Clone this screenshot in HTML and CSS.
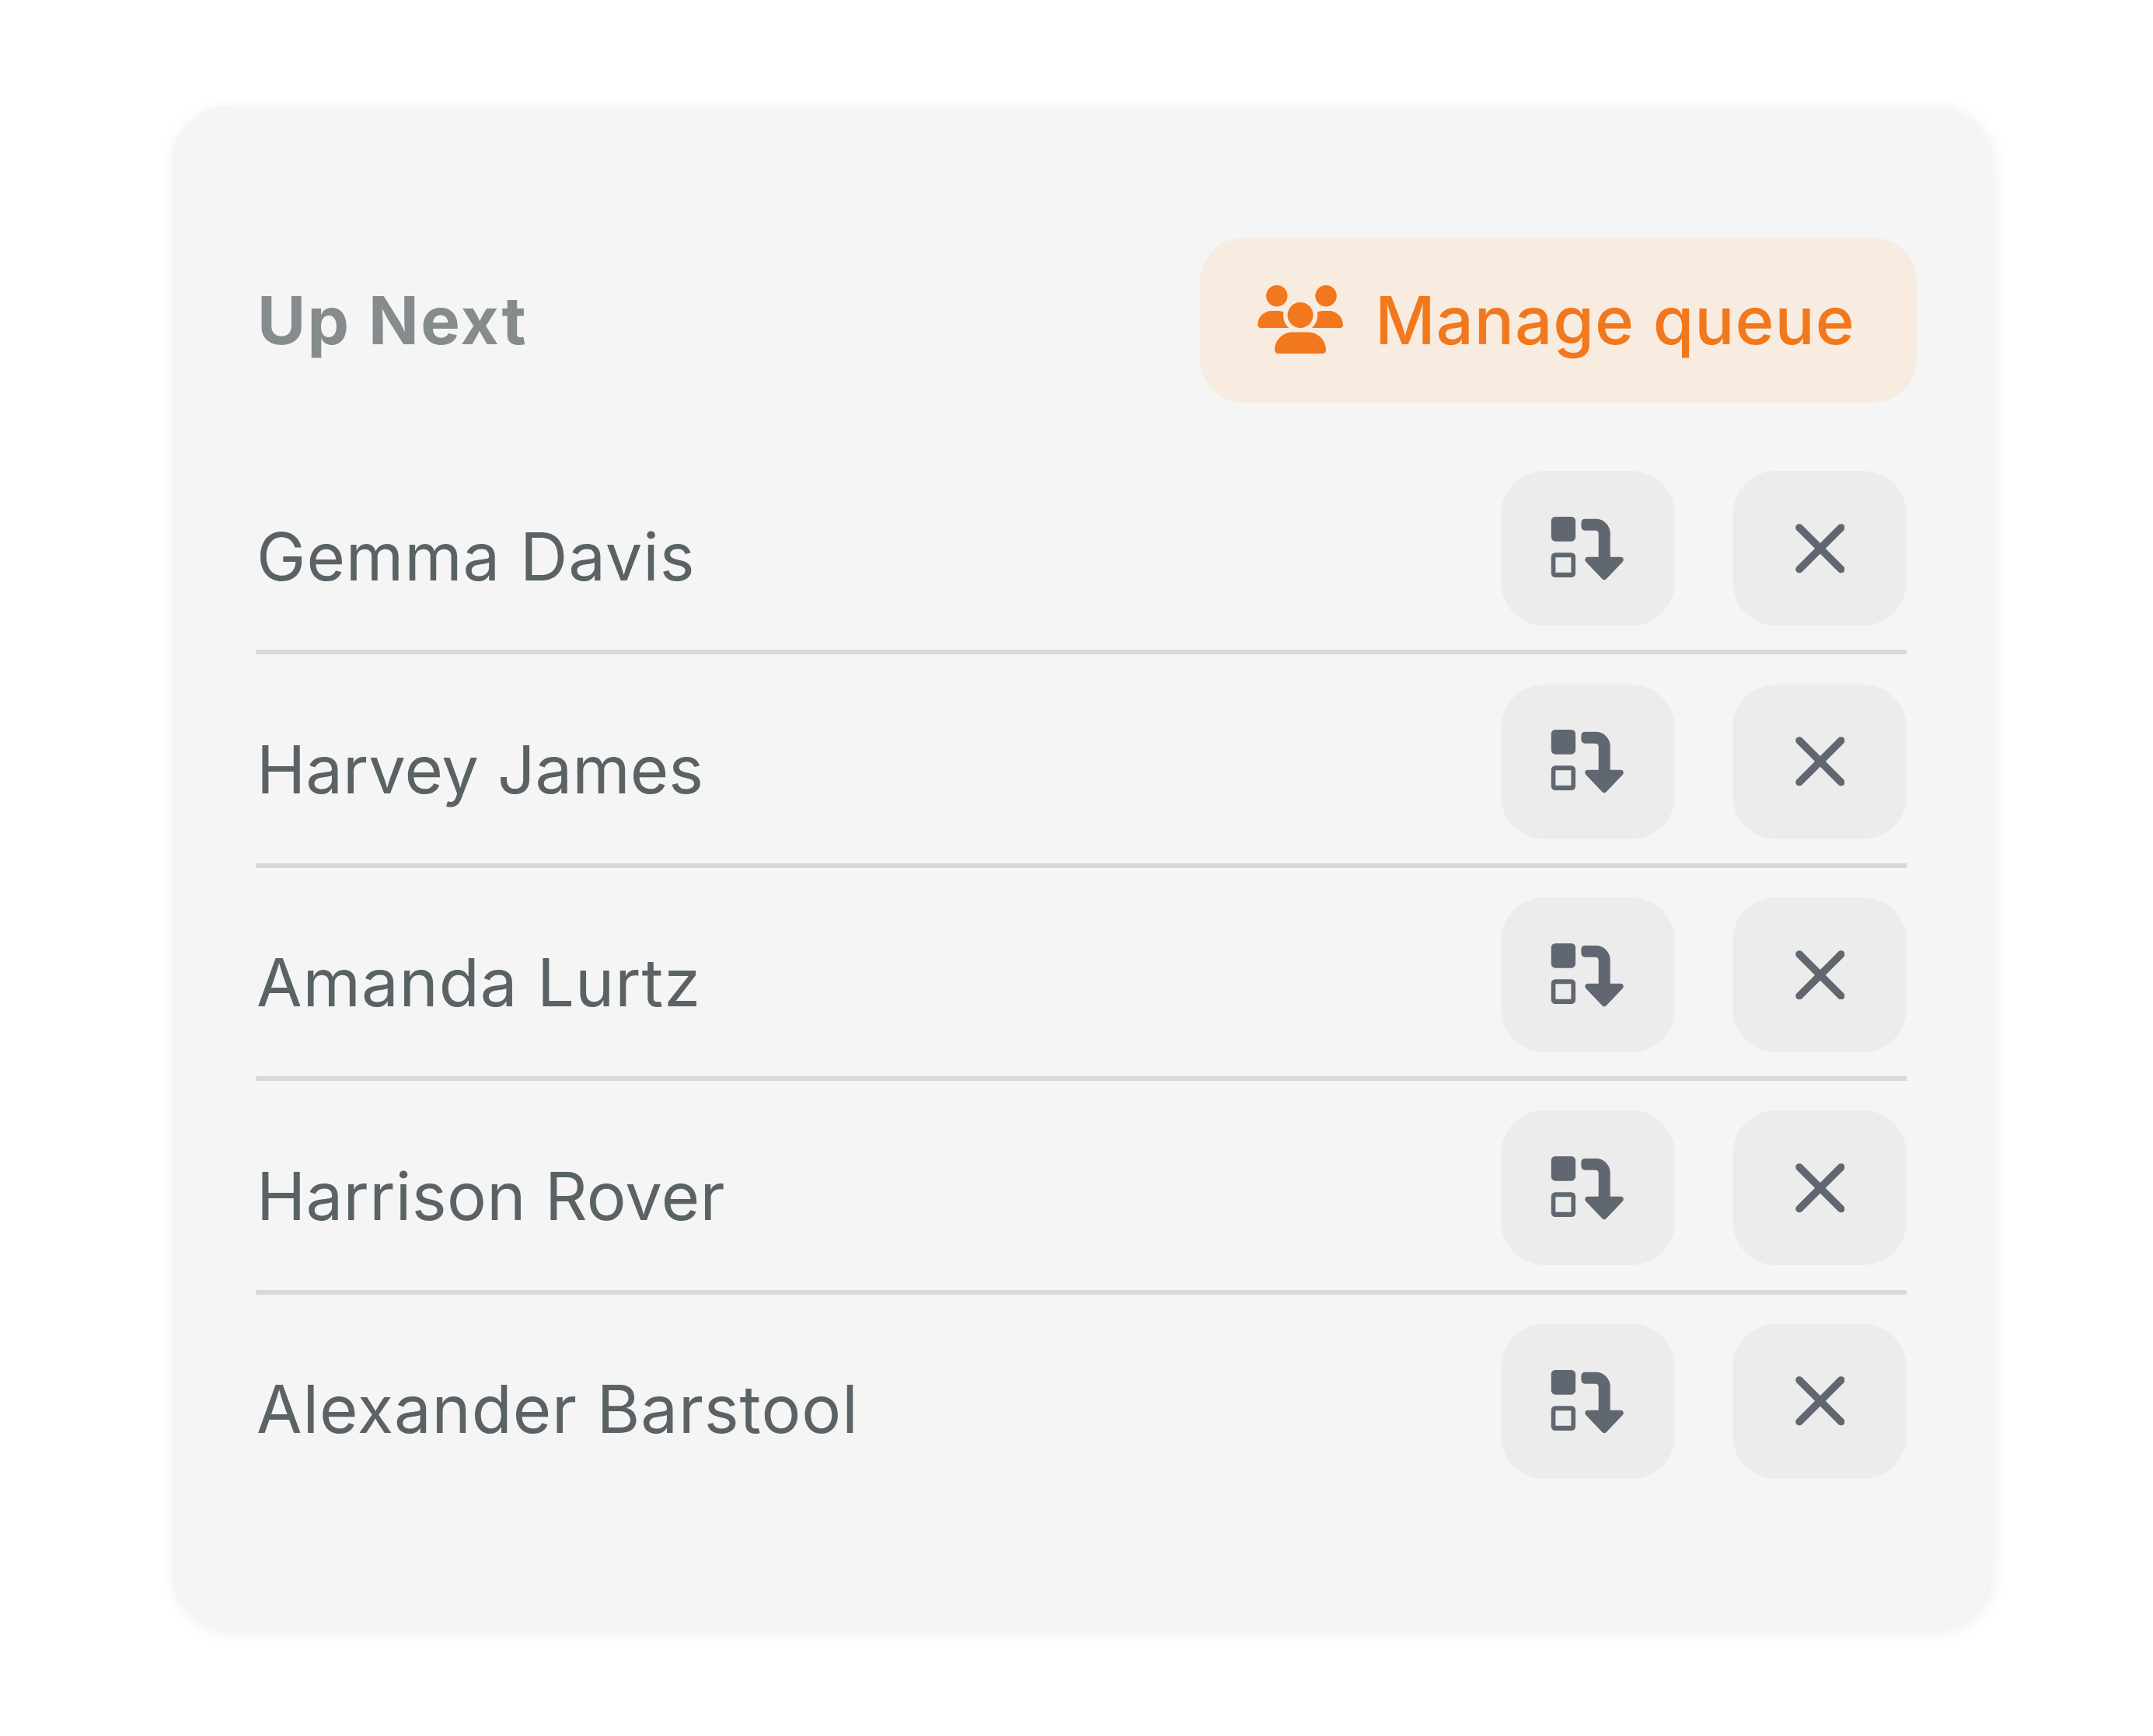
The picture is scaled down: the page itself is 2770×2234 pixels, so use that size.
FILE: index.html
```html
<!DOCTYPE html>
<html lang="en">
<head>
<meta charset="utf-8">
<title>Up Next</title>
<link rel="stylesheet" href="styles.css">
</head>
<body>
<svg width="0" height="0" class="sprite" aria-hidden="true">
  <symbol id="swap" viewBox="256 220 284 250">
    <rect x="258" y="223" width="94" height="95" rx="16"/>
    <path fill-rule="evenodd" d="M274 362H336a16 16 0 0 1 16 16V441a16 16 0 0 1-16 16H274a16 16 0 0 1-16-16V378a16 16 0 0 1 16-16ZM275 380V438H335V380Z"/>
    <path d="M390 231H430A56 56 0 0 1 486 287V378H526C537 378 541 389 534 397L471 463Q463 471 455 463L392 397C385 389 389 378 400 378H441V289Q441 276 428 276H390Q374 276 374 260V247Q374 231 390 231Z"/>
  </symbol>
  <symbol id="close" viewBox="329 250 191 191">
    <path d="M344 265L505 426M505 265L344 426" fill="none" stroke="currentColor" stroke-width="29" stroke-linecap="round"/>
  </symbol>
</svg>
<main class="card">
  <header class="header">
    <h1 class="title">Up Next</h1>
    <button class="manage">
      <svg class="users" viewBox="0 0 640 512"><path d="M144 0a80 80 0 1 1 0 160A80 80 0 1 1 144 0zM512 0a80 80 0 1 1 0 160A80 80 0 1 1 512 0zM0 298.7C0 239.8 47.8 192 106.7 192h42.7c15.9 0 31 3.5 44.6 9.7c-1.3 7.2-1.9 14.7-1.9 22.3c0 38.2 16.8 72.5 43.3 96H21.3C9.6 320 0 310.4 0 298.7zM405.3 320c26.6-23.5 43.3-57.8 43.3-96c0-7.6-.7-15-1.9-22.3c13.6-6.3 28.7-9.7 44.6-9.7h42C592.2 192 640 239.8 640 298.7c0 11.8-9.6 21.3-21.3 21.3zM224 224a96 96 0 1 1 192 0a96 96 0 1 1-192 0zM128 485.3C128 411.7 187.7 352 261.3 352h117.4C452.3 352 512 411.7 512 485.3c0 14.7-11.9 26.7-26.7 26.7H154.7c-14.7 0-26.7-11.9-26.7-26.7z"/></svg>
      <span class="manage-label">Manage queue</span>
    </button>
  </header>
  <ul class="queue">
    <li class="row"><span class="name">Gemma Davis</span><button class="action" aria-label="Move down"><svg class="swap"><use href="#swap"/></svg></button><button class="action" aria-label="Remove"><svg class="close"><use href="#close"/></svg></button></li>
    <li class="row"><span class="name tight">Harvey James</span><button class="action" aria-label="Move down"><svg class="swap"><use href="#swap"/></svg></button><button class="action" aria-label="Remove"><svg class="close"><use href="#close"/></svg></button></li>
    <li class="row"><span class="name">Amanda Lurtz</span><button class="action" aria-label="Move down"><svg class="swap"><use href="#swap"/></svg></button><button class="action" aria-label="Remove"><svg class="close"><use href="#close"/></svg></button></li>
    <li class="row"><span class="name snug">Harrison Rover</span><button class="action" aria-label="Move down"><svg class="swap"><use href="#swap"/></svg></button><button class="action" aria-label="Remove"><svg class="close"><use href="#close"/></svg></button></li>
    <li class="row"><span class="name">Alexander Barstool</span><button class="action" aria-label="Move down"><svg class="swap"><use href="#swap"/></svg></button><button class="action" aria-label="Remove"><svg class="close"><use href="#close"/></svg></button></li>
  </ul>
</main>
</body>
</html>
```
FILE: styles.css
```css
* { box-sizing: border-box; }
html { background: #fff; }
body {
  margin: 0;
  min-height: 100vh;
  padding: 137px 0 0 221px;
  font-family: Inter, "Liberation Sans", sans-serif;
  font-optical-sizing: none;
  font-size: 85px;
  line-height: 104px;
}
.sprite { position: absolute; }
.card {
  width: 2339px;
  height: 1958px;
  padding: 169px 106.6px 0 108.4px;
  border-radius: 72px;
  background: #f5f5f5;
  box-shadow: 4px 4px 22px rgba(0, 0, 0, 0.08);
}
.header {
  display: flex;
  align-items: center;
  justify-content: space-between;
  height: 212px;
  margin-right: -13px;
}
.title {
  margin: 0;
  padding: 2px 0 0 1.5px;
  font-size: inherit;
  font-weight: 700;
  letter-spacing: 2.4px;
  color: #868b8e;
}
.manage {
  display: flex;
  align-items: center;
  width: 922px;
  height: 212px;
  padding: 0 0 0 74px;
  border: 0;
  border-radius: 56px;
  background: #f8ebdf;
  color: #f1781d;
  font: inherit;
  font-weight: 500;
  white-space: nowrap;
}
.manage-label {
  padding-top: 2px;
  letter-spacing: 1.05px;
}
.users {
  width: 110px;
  height: 88px;
  margin-right: 40.5px;
  margin-top: -3px;
  fill: currentColor;
}
.queue {
  margin: 50px 0 0;
  padding: 0;
  list-style: none;
}
.row {
  display: flex;
  align-items: flex-start;
  gap: 74.6px;
  height: 274.4px;
  padding-top: 38.2px;
  border-bottom: 6px solid #d8d8d8;
}
.row:last-child { border-bottom: 0; }
.name {
  flex: 1;
  padding: 58.4px 0 0 0.7px;
  letter-spacing: 0.9px;
  color: #5a6266;
}
.name.snug { letter-spacing: 0.3px; }
.name.tight { letter-spacing: 0; }
.action {
  display: flex;
  align-items: center;
  justify-content: center;
  width: 224px;
  height: 199px;
  padding: 0;
  border: 0;
  border-radius: 56px;
  background: #ececec;
  color: #606770;
}
.swap { width: 94.7px; height: 83.3px; fill: currentColor; }
.close { width: 63.7px; height: 63.7px; }
```
